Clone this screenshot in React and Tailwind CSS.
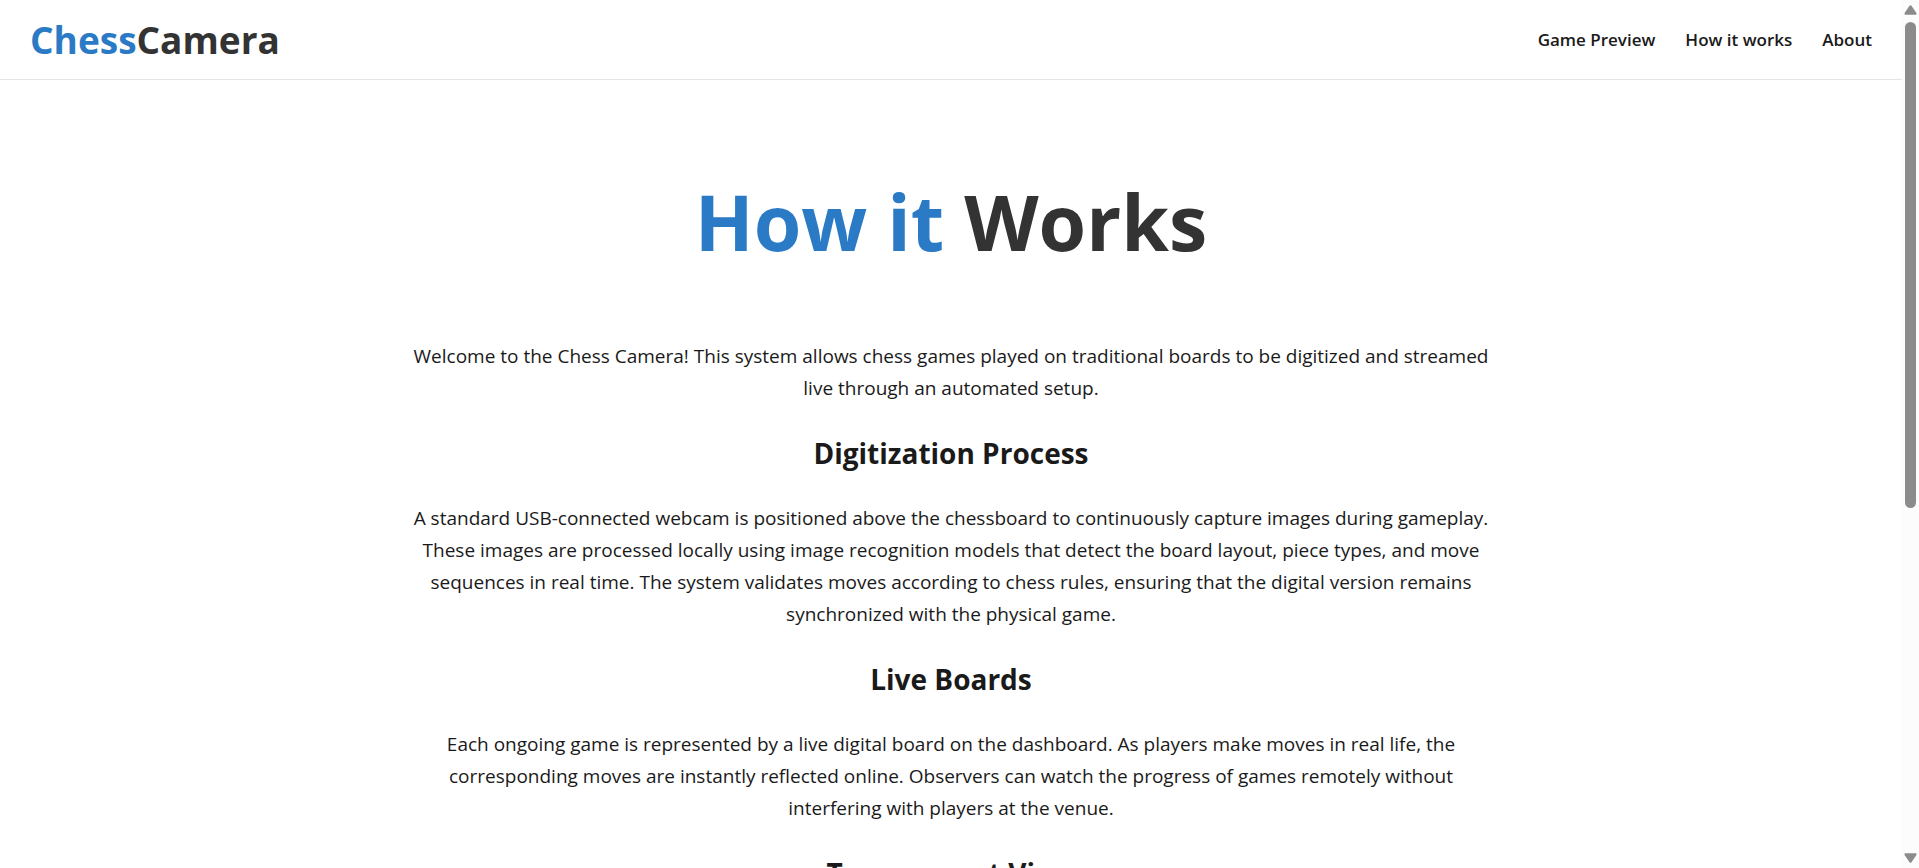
const links = ["Game Preview", "How it works", "About"];

const sections = [
  {
    title: "Digitization Process",
    text: "A standard USB-connected webcam is positioned above the chessboard to continuously capture images during gameplay. These images are processed locally using image recognition models that detect the board layout, piece types, and move sequences in real time. The system validates moves according to chess rules, ensuring that the digital version remains synchronized with the physical game.",
  },
  {
    title: "Live Boards",
    text: "Each ongoing game is represented by a live digital board on the dashboard. As players make moves in real life, the corresponding moves are instantly reflected online. Observers can watch the progress of games remotely without interfering with players at the venue.",
  },
  { title: "Tournament View", text: "" },
];

function Header() {
  return (
    <header className="flex h-20 shrink-0 items-center justify-between border-b border-[#e5e5e5] px-[30px]">
      <a href="#home" className="text-[37px] leading-[60px] font-bold text-[#333333]">
        <span className="text-[#2b7ac5]">Chess</span>Camera
      </a>
      <nav className="flex gap-[30px]">
        {links.map((label) => (
          <a key={label} href="#top" className="text-[17px] leading-7 font-semibold">
            {label}
          </a>
        ))}
      </nav>
    </header>
  );
}

function Scrollbar() {
  return (
    <div aria-hidden="true" className="flex w-[17px] shrink-0 flex-col items-center bg-[#fcfcfc] py-[5px]">
      <svg width="13" height="10" viewBox="0 0 13 10" className="shrink-0" fill="#8b8b8b">
        <path d="M5.5.8Q6.5-.4 7.5.8L12.4 8Q13 9.7 11.5 9.8H1.5Q0 9.7.6 8Z" />
      </svg>
      <div className="my-[7px] w-full flex-1 px-[3px]">
        <div className="h-[59%] rounded-full bg-[#8b8b8b]" />
      </div>
      <svg width="13" height="10" viewBox="0 0 13 10" className="shrink-0" fill="#8b8b8b">
        <path d="M5.5 9.2Q6.5 10.4 7.5 9.2L12.4 2Q13 .3 11.5.2H1.5Q0 .3.6 2Z" />
      </svg>
    </div>
  );
}

export default function App() {
  return (
    <div className="flex h-screen bg-white font-['Open_Sans','Noto_Sans',sans-serif] text-[#1a1a1a]">
      <div className="flex min-w-0 flex-1 flex-col overflow-hidden">
        <Header />
        <main className="mx-auto w-full max-w-[1100px] pt-[78px] text-center">
          <h1 className="text-[77px] leading-[128px] font-bold text-[#333333]">
            <span className="text-[#2b7ac5]">How it</span> Works
          </h1>
          <p className="mt-[54px] text-[19px] leading-8">
            Welcome to the Chess Camera! This system allows chess games played on traditional boards to be digitized and streamed live through an automated setup.
          </p>
          {sections.map(({ title, text }) => (
            <section key={title}>
              <h2 className="my-[25px] text-[28px] leading-[48px] font-bold">{title}</h2>
              <p className="text-[19px] leading-8">{text}</p>
            </section>
          ))}
        </main>
      </div>
      <Scrollbar />
    </div>
  );
}
